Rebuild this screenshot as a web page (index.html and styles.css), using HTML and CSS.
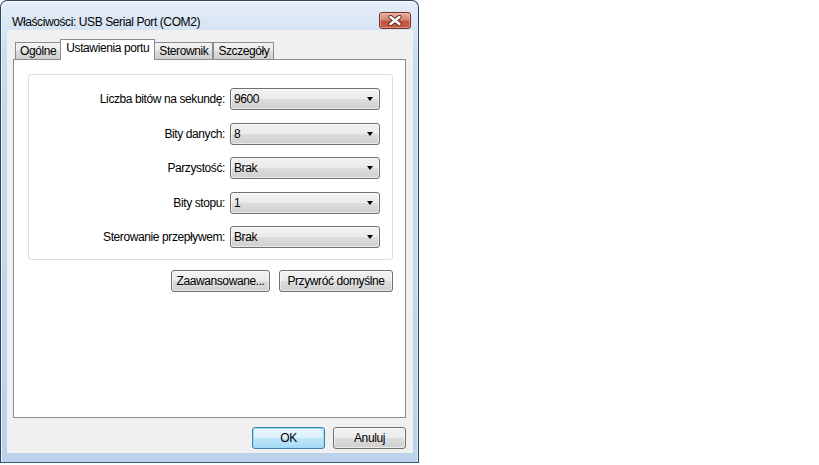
FILE: index.html
```html
<!DOCTYPE html>
<html lang="pl">
<head>
  <meta charset="UTF-8">
  <title>Właściwości: USB Serial Port (COM2)</title>
  <link rel="stylesheet" href="styles.css">
</head>
<body>
  <div class="window">
    <!-- Title bar -->
    <div class="titlebar">
      <span class="title">Właściwości: USB Serial Port (COM2)</span>
      <button class="close" aria-label="Zamknij">
        <svg width="16" height="11" viewBox="0 0 16 11">
          <path d="M3.5 2 L12.5 9 M12.5 2 L3.5 9" stroke="#5a2a24" stroke-width="4.2" stroke-linecap="round"/>
          <path d="M3.5 2 L12.5 9 M12.5 2 L3.5 9" stroke="#fff" stroke-width="2.4" stroke-linecap="round"/>
        </svg>
      </button>
    </div>

    <div class="client">
      <!-- Tabs -->
      <div class="tabs">
        <div class="tab">Ogólne</div>
        <div class="tab active">Ustawienia portu</div>
        <div class="tab">Sterownik</div>
        <div class="tab">Szczegóły</div>
      </div>

      <div class="panel">
        <div class="group">
          <div class="row">
            <label>Liczba bitów na sekundę:</label>
            <div class="combo">9600</div>
          </div>
          <div class="row">
            <label>Bity danych:</label>
            <div class="combo">8</div>
          </div>
          <div class="row">
            <label>Parzystość:</label>
            <div class="combo">Brak</div>
          </div>
          <div class="row">
            <label>Bity stopu:</label>
            <div class="combo">1</div>
          </div>
          <div class="row">
            <label>Sterowanie przepływem:</label>
            <div class="combo">Brak</div>
          </div>
        </div>

        <div class="actions">
          <button class="btn wide">Zaawansowane...</button>
          <button class="btn wider">Przywróć domyślne</button>
        </div>
      </div>

      <!-- Dialog buttons -->
      <div class="footer">
        <button class="btn default">OK</button>
        <button class="btn">Anuluj</button>
      </div>
    </div>
  </div>
</body>
</html>
```

FILE: styles.css
```css
/* Reset */
* {
  box-sizing: border-box;
}

body {
  margin: 0;
  background: #fff;
  font-family: 'Liberation Sans', Arial, sans-serif;
  font-size: 12px;
  letter-spacing: -0.4px;
  color: #000;
}

button {
  font-family: inherit;
  font-size: 12px;
  letter-spacing: -0.4px;
  color: #000;
  cursor: pointer;
}

/* Window frame */
.window {
  width: 419px;
  height: 463px;
  border: 1px solid #2d4560;
  border-bottom-color: #33576f;
  border-radius: 7px 7px 0 0;
  background: linear-gradient(to bottom, #e6eef8 0, #d6e4f3 28px, #c9dbef 60px, #bcd2ea 100%);
  box-shadow: inset 0 1px 0 #fbfdff, inset 1px 0 0 #e9f1fa, inset -1px 0 0 #dde8f4;
  padding: 0 5px 9px 6px;
  display: flex;
  flex-direction: column;
}

.titlebar {
  height: 29px;
  display: flex;
  justify-content: space-between;
  align-items: flex-start;
  padding: 12px 0 0 5px;
}

.title {
  line-height: 15px;
  margin-top: 2px;
}

.close {
  width: 32px;
  height: 17px;
  margin: -1px 2px 0 0;
  padding: 0;
  border: 1px solid #6e2f28;
  border-radius: 3px;
  background: linear-gradient(to bottom, #e9ab9d 0, #d88775 45%, #c4523e 55%, #c75b45 100%);
  box-shadow: inset 0 0 0 1px rgba(255, 210, 200, 0.45);
  display: flex;
  align-items: center;
  justify-content: center;
}

/* Client area */
.client {
  flex: 1;
  background: #f0f0f0;
  display: flex;
  flex-direction: column;
}

/* Tabs */
.tabs {
  margin: 9px 0 0 6px;
  width: 393px;
  height: 21px;
  padding-left: 2px;
  border-bottom: 1px solid #898c95;
  display: flex;
  align-items: flex-end;
}

.tab {
  height: 17px;
  padding: 0 4px;
  border: 1px solid #898c95;
  border-bottom: none;
  background: linear-gradient(to bottom, #f3f3f3 0, #ebebeb 50%, #dddddd 51%, #cfcfcf 100%);
  line-height: 17px;
}

.tab.active {
  height: 21px;
  margin: 0 -1px -1px -1px;
  padding: 0 5px;
  background: #fff;
  line-height: 17px;
}

/* Tab page */
.panel {
  margin-left: 6px;
  width: 393px;
  height: 358px;
  border: 1px solid #898c95;
  border-top: none;
  background: #fff;
  padding: 14px 0 0 14px;
}

.group {
  width: 365px;
  height: 186px;
  border: 1px solid #d5dfe5;
  border-radius: 3px;
  padding: 13px 12px 0 0;
  display: flex;
  flex-direction: column;
  gap: 12.5px;
}

.row {
  display: flex;
  justify-content: flex-end;
  align-items: center;
  gap: 5px;
}

.combo {
  width: 150px;
  height: 22px;
  border: 1px solid #707070;
  border-radius: 3px;
  background: linear-gradient(to bottom, #f2f2f2 0, #ebebeb 50%, #dddddd 51%, #cfcfcf 100%);
  box-shadow: inset 0 0 0 1px rgba(255, 255, 255, 0.55);
  padding-left: 3px;
  display: flex;
  align-items: center;
  justify-content: space-between;
}

.combo::after {
  content: "";
  margin-right: 6px;
  border-style: solid;
  border-width: 4px 3.5px 0;
  border-color: #000 transparent transparent;
}

/* Buttons */
.btn {
  width: 73px;
  height: 22px;
  padding: 0;
  border: 1px solid #707070;
  border-radius: 3px;
  background: linear-gradient(to bottom, #f2f2f2 0, #ebebeb 50%, #dddddd 51%, #cfcfcf 100%);
  box-shadow: inset 0 0 0 1px rgba(255, 255, 255, 0.55);
}

.btn.wide {
  width: 99px;
}

.btn.wider {
  width: 114px;
}

.btn.default {
  border-color: #3c7fb1;
  background: linear-gradient(to bottom, #eaf6fd 0, #d9f0fc 50%, #bee6fd 51%, #a7d9f5 100%);
  box-shadow: inset 0 0 0 1px #9fd8f6;
}

.actions {
  width: 365px;
  margin-top: 10px;
  display: flex;
  justify-content: flex-end;
  gap: 9px;
}

.footer {
  margin-top: 9px;
  padding-right: 7px;
  display: flex;
  justify-content: flex-end;
  gap: 8px;
}
```
